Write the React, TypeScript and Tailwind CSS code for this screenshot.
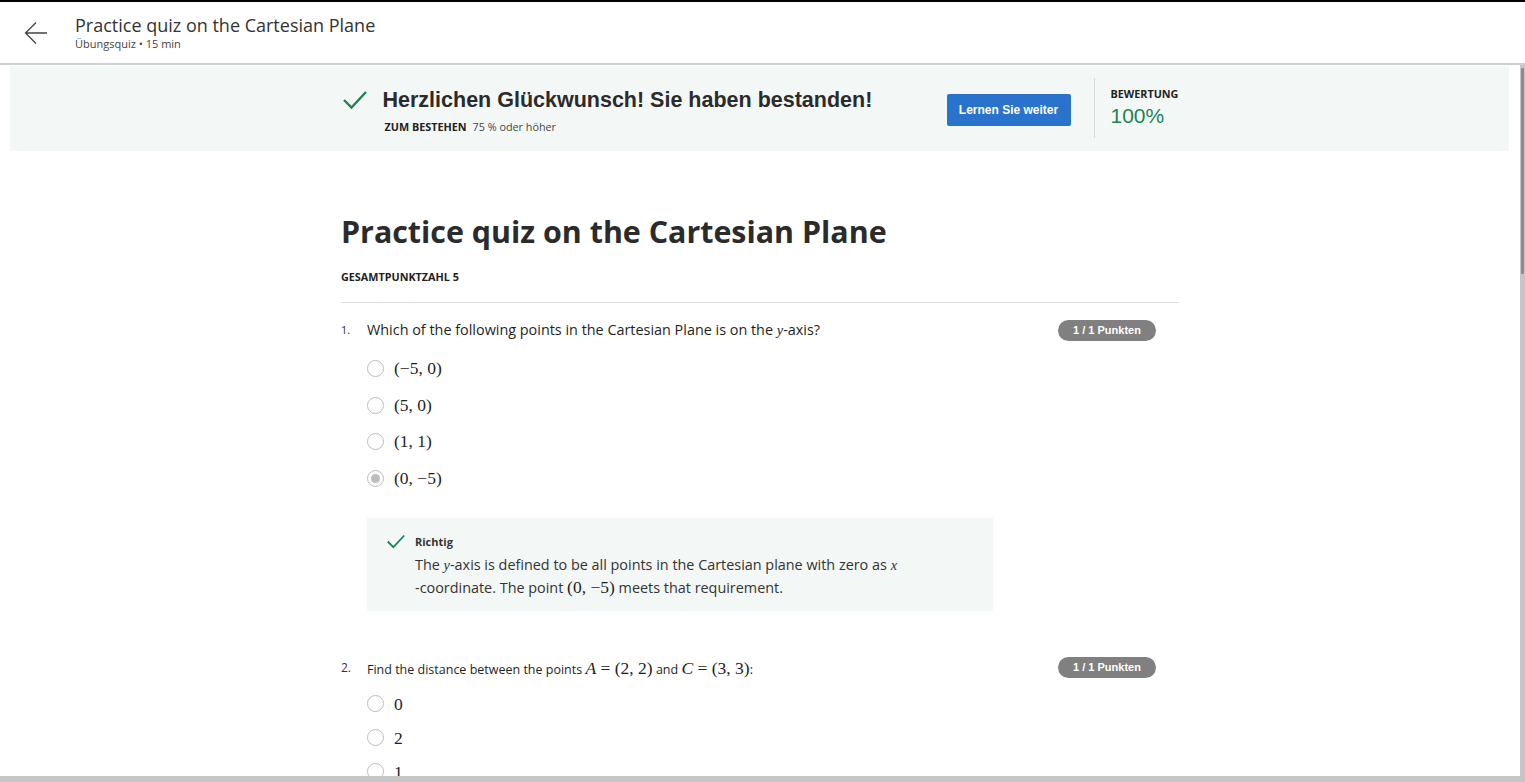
import type { ReactNode } from "react";

const sans = "font-['Open_Sans',sans-serif]";
const arial = "font-['Liberation_Sans',Arial,sans-serif]";
const serif = "font-['Liberation_Serif','DejaVu_Serif',serif]";

function Check({ className }: { className?: string }) {
  return (
    <svg viewBox="0 0 24 20" className={className} fill="none">
      <polyline points="1,10 8.5,17.5 23,2" stroke="#1f8354" strokeWidth="2.4" />
    </svg>
  );
}

function M({ children }: { children: ReactNode }) {
  return <span className={`${serif} text-[17.5px] text-[#1f1f1f]`}>{children}</span>;
}

function I({ children }: { children: ReactNode }) {
  return <span className={`${serif} italic`}>{children}</span>;
}

function Radio({ checked }: { checked?: boolean }) {
  return (
    <span className="flex h-[17px] w-[17px] shrink-0 items-center justify-center rounded-full border-[1.5px] border-[#bdbdbd] bg-white">
      {checked && <span className="h-[9px] w-[9px] rounded-full bg-[#bdbdbd]" />}
    </span>
  );
}

function Badge() {
  return (
    <span
      className={`${arial} mr-[23px] flex h-[21px] w-[98px] shrink-0 items-center justify-center rounded-full bg-[#808080] text-[11px] font-bold text-white`}
    >
      1 / 1 Punkten
    </span>
  );
}

function Option({ label, checked, h }: { label: ReactNode; checked?: boolean; h: string }) {
  return (
    <div className={`flex items-center gap-[10px] ${h}`}>
      <Radio checked={checked} />
      <M>{label}</M>
    </div>
  );
}

export default function App() {
  return (
    <div className={`${sans} flex h-[782px] w-full flex-col overflow-hidden bg-white text-[#1f1f1f]`}>
      <div className="h-[2px] bg-black" />
      {/* header */}
      <header className="flex h-[63px] shrink-0 items-center border-b-2 border-[#cfcfcf]">
        <svg viewBox="0 0 24 24" className="ml-[24px] h-[24px] w-[24px]" fill="none" stroke="#444" strokeWidth="1.3">
          <path d="M23 12H1.5M12 1.5L1.5 12L12 22.5" />
        </svg>
        <div className="ml-[27px] flex flex-col">
          <span className="text-[18px] leading-[22px] text-[#333]">Practice quiz on the Cartesian Plane</span>
          <span className="text-[11px] leading-[15px] text-[#444]">Übungsquiz • 15 min</span>
        </div>
      </header>

      <div className="flex min-h-0 flex-1">
        <div className="flex min-w-0 flex-1 flex-col">
          <main className="min-h-0 flex-1 overflow-hidden">
            {/* banner */}
            <section className="ml-[10px] mr-[11px] mt-[1px] h-[85px] bg-[#f3f8f6]">
              <div className="mx-auto flex h-full w-[838px]">
                <div className="w-[606px] pt-[20px]">
                  <div className="flex items-center">
                    <Check className="ml-[2px] h-[20px] w-[24px]" />
                    <span className={`${arial} ml-[16px] text-[21.5px] font-bold leading-[28px] text-[#2b2b2b]`}>
                      Herzlichen Glückwunsch! Sie haben bestanden!
                    </span>
                  </div>
                  <div className="ml-[44px] mt-[6px] text-[10.8px] leading-[14px]">
                    <span className="font-bold uppercase text-[#222]">Zum Bestehen</span>
                    <span className="ml-[6px] text-[#444]">75 % oder höher</span>
                  </div>
                </div>
                <button
                  className={`${arial} mt-[28px] h-[32px] w-[124px] rounded-[2px] bg-[#2a73cc] text-[12px] font-bold text-white`}
                >
                  Lernen Sie weiter
                </button>
                <div className="ml-[23px] mt-[12px] h-[60px] w-px bg-[#d8d8d8]" />
                <div className="ml-[16px] pt-[21px]">
                  <div className="text-[10.8px] font-bold leading-[14px] text-[#222]">BEWERTUNG</div>
                  <div className={`${arial} mt-[3px] text-[21px] leading-[24px] text-[#1f8354]`}>100%</div>
                </div>
              </div>
            </section>

            {/* content */}
            <div className="mx-auto w-[838px]">
              <h1 className="mt-[61px] text-[30.4px] font-bold leading-[40px] text-[#2b2b2b]">
                Practice quiz on the Cartesian Plane
              </h1>
              <div className="mt-[18px] text-[10.8px] font-bold leading-[14px] text-[#222]">GESAMTPUNKTZAHL 5</div>
              <div className="mt-[18px] h-px bg-[#e0e0e0]" />

              {/* question 1 */}
              <div className="mt-[16px] flex items-center">
                <span className="w-[26px] text-[11px] text-[#333]">1.</span>
                <span className="flex-1 text-[14.4px] text-[#1f1f1f]">
                  Which of the following points in the Cartesian Plane is on the <I>y</I>-axis?
                </span>
                <Badge />
              </div>
              <div className="ml-[26px] mt-[8px] flex flex-col">
                <Option h="h-[37px]" label="(−5, 0)" />
                <Option h="h-[37px]" label="(5, 0)" />
                <Option h="h-[36px]" label="(1, 1)" />
                <Option h="h-[37px]" label="(0, −5)" checked />
              </div>

              <div className="ml-[26px] mt-[21px] h-[93px] w-[626px] bg-[#f3f8f6] pl-[20px] pt-[16px]">
                <div className="flex items-center">
                  <Check className="h-[15px] w-[18px]" />
                  <span className="ml-[10px] text-[11px] font-bold text-[#333]">Richtig</span>
                </div>
                <p className="ml-[28px] mt-[4px] text-[14.4px] leading-[22px] text-[#333]">
                  The <I>y</I>-axis is defined to be all points in the Cartesian plane with zero as <I>x</I>
                  <br />
                  -coordinate. The point <M>(0, −5)</M> meets that requirement.
                </p>
              </div>

              {/* question 2 */}
              <div className="mt-[44px] flex items-center">
                <span className="w-[26px] text-[12px] text-[#333]">2.</span>
                <span className="flex-1 text-[12.5px] text-[#1f1f1f]">
                  Find the distance between the points{" "}
                  <M>
                    <I>A</I> = (2, 2)
                  </M>{" "}
                  and{" "}
                  <M>
                    <I>C</I> = (3, 3)
                  </M>
                  :
                </span>
                <Badge />
              </div>
              <div className="ml-[26px] mt-[6px] flex flex-col">
                <Option h="h-[34px]" label="0" />
                <Option h="h-[34px]" label="2" />
                <Option h="h-[34px]" label="1" />
              </div>
            </div>
          </main>
          <div className="h-[6px] shrink-0 bg-[#c6c6c6]" />
        </div>
        {/* scrollbar */}
        <div className="flex w-[5px] shrink-0 flex-col bg-[#c6c6c6]">
          <div className="ml-[1px] mt-[3px] h-[206px] w-[3px] rounded-[1px] bg-[#8c8c8c]" />
        </div>
      </div>
    </div>
  );
}
